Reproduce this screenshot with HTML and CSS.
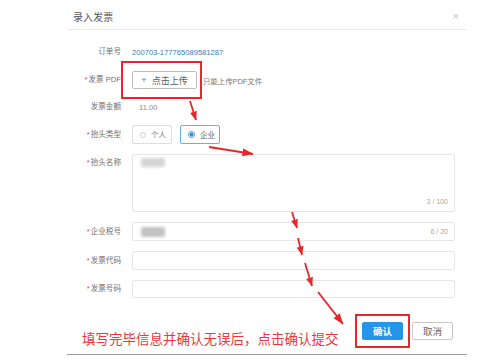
FILE: index.html
```html
<!DOCTYPE html>
<html lang="zh">
<head>
<meta charset="utf-8">
<title>录入发票</title>
<link rel="stylesheet" href="styles.css">
</head>
<body>
<div class="modal">
  <div class="modal-header">
    <span class="title">录入发票</span>
    <span class="close">×</span>
  </div>
  <div class="form">
    <div class="row h18">
      <div class="label">订单号</div>
      <div class="field"><span class="value-link">200703-177765089581287</span></div>
    </div>
    <div class="row h18">
      <div class="label"><i class="req">*</i>发票 PDF</div>
      <div class="field">
        <button class="upload"><span class="plus">+</span>点击上传</button>
        <span class="hint">只能上传PDF文件</span>
      </div>
    </div>
    <div class="row h16">
      <div class="label">发票金额</div>
      <div class="field"><span class="value">11.00</span></div>
    </div>
    <div class="row h19">
      <div class="label"><i class="req">*</i>抬头类型</div>
      <div class="field radios">
        <label class="radio"><span class="dot"></span>个人</label>
        <label class="radio checked"><span class="dot"></span>企业</label>
      </div>
    </div>
    <div class="row top h58">
      <div class="label"><i class="req">*</i>抬头名称</div>
      <div class="field">
        <div class="input area">
          <span class="blur blur-a"></span>
          <span class="count">3 / 100</span>
        </div>
      </div>
    </div>
    <div class="row h19">
      <div class="label"><i class="req">*</i>企业税号</div>
      <div class="field">
        <div class="input line">
          <span class="blur blur-b"></span>
          <span class="count">6 / 20</span>
        </div>
      </div>
    </div>
    <div class="row h19">
      <div class="label"><i class="req">*</i>发票代码</div>
      <div class="field"><div class="input line"></div></div>
    </div>
    <div class="row h18">
      <div class="label"><i class="req">*</i>发票号码</div>
      <div class="field"><div class="input line"></div></div>
    </div>
  </div>
  <div class="footer">
    <button class="btn primary">确认</button>
    <button class="btn">取消</button>
  </div>
</div>

<p class="note">填写完毕信息并确认无误后，点击确认提交</p>
<div class="mark mark-upload"></div>
<div class="mark mark-confirm"></div>

<svg class="arrows" width="492" height="363" viewBox="0 0 492 363">
  <defs>
    <marker id="ah" markerUnits="userSpaceOnUse" markerWidth="9" markerHeight="7" refX="8.5" refY="3.5" orient="auto">
      <path d="M0,0 L9,3.5 L0,7 Z" fill="#e8262a"/>
    </marker>
    <marker id="ahl" markerUnits="userSpaceOnUse" markerWidth="11" markerHeight="8" refX="10.5" refY="4" orient="auto">
      <path d="M0,0 L11,4 L0,8 Z" fill="#e8262a"/>
    </marker>
  </defs>
  <g stroke="#e8262a" stroke-width="1.8" fill="none">
    <line x1="190" y1="101" x2="196" y2="120" marker-end="url(#ah)"/>
    <line x1="209" y1="147" x2="253" y2="154" marker-end="url(#ahl)"/>
    <line x1="292" y1="212" x2="297" y2="228" marker-end="url(#ah)"/>
    <line x1="298" y1="238" x2="302" y2="255" marker-end="url(#ah)"/>
    <line x1="305" y1="263" x2="312" y2="286" marker-end="url(#ah)"/>
    <line x1="318" y1="292" x2="343" y2="324" marker-end="url(#ahl)"/>
  </g>
</svg>
</body>
</html>
```

FILE: styles.css
```css
* { box-sizing: border-box; }

html, body {
  margin: 0;
  padding: 0;
  background: #fff;
}

body {
  width: 492px;
  height: 363px;
  overflow: hidden;
  position: relative;
  font-family: "Liberation Sans", "Noto Sans CJK SC", sans-serif;
  color: #666;
}

.modal {
  margin-left: 67px;
  width: 400px;
  background: #fff;
}

.modal-header {
  height: 30px;
  padding: 3px 8px 0 6px;
  border-bottom: 1px solid #ececec;
  display: flex;
  align-items: center;
  justify-content: space-between;
}

.title {
  font-size: 10px;
  color: #555;
  letter-spacing: 0.1px;
}

.close {
  font-size: 11px;
  color: #c4c4c4;
  line-height: 1;
}

.form {
  padding-top: 13px;
  display: flex;
  flex-direction: column;
  gap: 10px;
}

.row {
  display: flex;
  align-items: center;
}

.row.top { align-items: flex-start; }

.h16 { height: 16px; }
.h18 { height: 18px; }
.h19 { height: 19px; }
.h58 { height: 58px; }

.label {
  width: 54px;
  flex: none;
  text-align: right;
  font-size: 7.6px;
  line-height: 18px;
  color: #707070;
  white-space: nowrap;
}

.req {
  font-style: normal;
  color: #e8474b;
  margin-right: 1px;
}

.field {
  margin-left: 11px;
  display: flex;
  align-items: center;
  height: 100%;
}

.value-link {
  font-size: 7.6px;
  color: #3b78bd;
}

.value {
  font-size: 7.6px;
  color: #8a8a8a;
  margin-left: 7px;
}

.upload {
  width: 65px;
  height: 18px;
  padding: 0;
  border: 1px solid #bdbdbd;
  border-radius: 2px;
  background: #fff;
  font-family: inherit;
  font-size: 9px;
  color: #5a5a5a;
  display: flex;
  align-items: center;
  justify-content: center;
}

.plus {
  font-size: 9px;
  font-weight: 300;
  margin-right: 5px;
  color: #777;
}

.hint {
  margin-left: 6px;
  font-size: 7.4px;
  color: #777;
}

.radios { gap: 8px; }

.radio {
  width: 40px;
  height: 19px;
  border: 1px solid #dedede;
  border-radius: 2px;
  display: flex;
  align-items: center;
  padding-left: 7px;
  font-size: 7.6px;
  color: #777;
}

.radio.checked {
  border-color: #66aef0;
  color: #666;
}

.dot {
  width: 6px;
  height: 6px;
  border: 1px solid #cfcfcf;
  border-radius: 50%;
  margin-right: 5px;
  flex: none;
}

.radio.checked .dot {
  width: 7px;
  height: 7px;
  border: 1px solid #3d95e8;
  background: radial-gradient(circle, #2f8be6 0 1.8px, #fff 2.2px);
}

.input {
  width: 323px;
  height: 100%;
  border: 1px solid #e6e6e6;
  border-radius: 2px;
  display: flex;
  justify-content: space-between;
  padding: 0 6px 0 8px;
}

.input.line { align-items: center; }

.input.area {
  align-items: flex-start;
  padding-top: 3px;
  padding-bottom: 6px;
}

.input.area .count {
  align-self: flex-end;
}

.count {
  font-size: 7px;
  color: #a8a8a8;
}

.blur {
  display: block;
  background: #cfcfcf;
  filter: blur(1.5px);
  border-radius: 2px;
}

.blur-a {
  width: 24px;
  height: 9px;
  background: #d4d4d4;
}

.blur-b {
  width: 24px;
  height: 10px;
  background: #c2c2c2;
}

.footer {
  padding: 24px 14px 14px 0;
  display: flex;
  justify-content: flex-end;
  gap: 9px;
  border-bottom: 1px solid #9c9c9c;
}

.btn {
  width: 41px;
  height: 18px;
  padding: 0;
  border: 1px solid #c8c8c8;
  border-radius: 2px;
  background: #fff;
  font-family: inherit;
  font-size: 9.5px;
  color: #666;
}

.btn.primary {
  background: #2594ea;
  border-color: #2594ea;
  color: #fff;
  font-weight: bold;
}

.note {
  position: absolute;
  left: 82px;
  top: 330px;
  margin: 0;
  font-size: 13.5px;
  line-height: 17px;
  color: #e8383c;
  font-family: "Noto Sans CJK SC", sans-serif;
  white-space: nowrap;
}

.mark {
  position: absolute;
  border: 2px solid #e22a2a;
}

.mark-upload {
  left: 121px;
  top: 61px;
  width: 81px;
  height: 38px;
}

.mark-confirm {
  left: 355px;
  top: 314px;
  width: 55px;
  height: 34px;
}

.arrows {
  position: absolute;
  left: 0;
  top: 0;
  pointer-events: none;
}
```
